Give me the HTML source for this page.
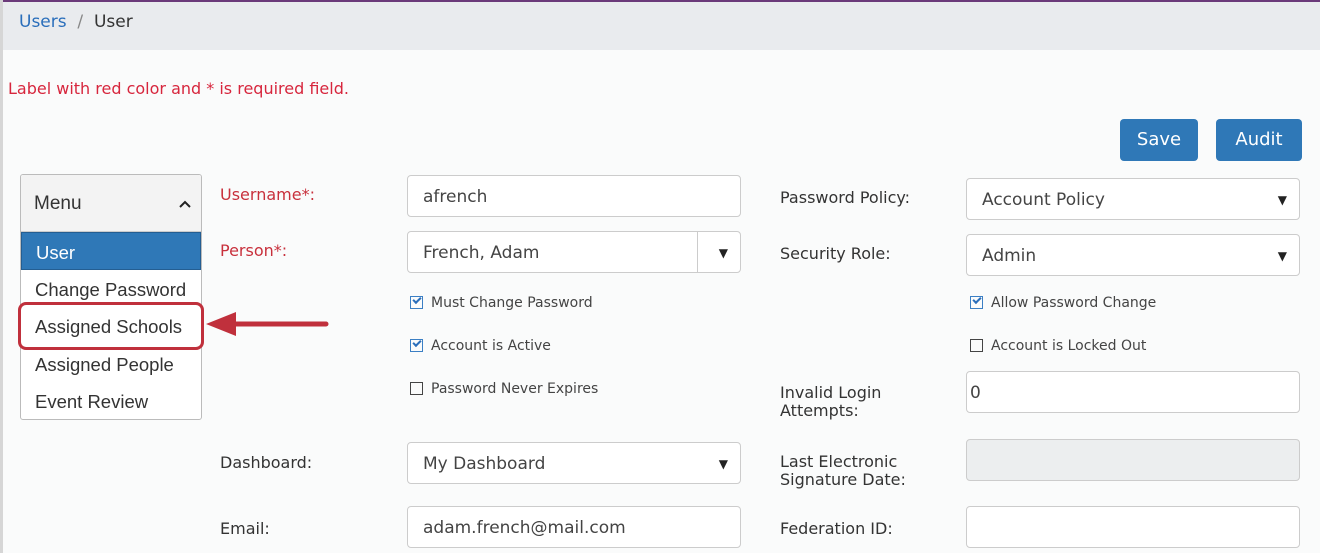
<!DOCTYPE html>
<html><head><meta charset="utf-8"><style>
*{box-sizing:border-box;margin:0;padding:0}
body{width:1320px;height:553px;overflow:hidden;background:#fafbfb;font-family:"DejaVu Sans","Liberation Sans",sans-serif;color:#333;position:relative}
.a{position:absolute}
.top{left:0;top:0;width:1320px;height:2px;background:#6b3a7a}
.lb{left:0;top:0;width:3px;height:553px;background:#d6d6d6}
.bc{left:3px;top:2px;width:1317px;height:48px;background:#e9ebee;font-size:17px;padding:10px 0 0 16px}
.bc span{color:#2a6ebb}
.req{left:8px;top:79px;color:#d7263d;font-size:16px}
.btn{background:#2f78b7;color:#fff;border-radius:4px;font-size:18px;text-align:center;line-height:42px;height:42px;top:119px}
.lbl{font-size:16px;color:#333}
.red{color:#c8303c}
.in{background:#fff;border:1px solid #ccc;border-radius:4px;font-size:17px;color:#444;padding-left:15px;line-height:42px;height:42px}
.in .c{position:absolute;right:12px;top:0;font-size:12px;color:#222}
.chk{font-size:14px;color:#444}
.box{display:inline-block;width:13px;height:13px;border:1.5px solid #444;vertical-align:-2px;margin-right:8px;position:relative}
.box.on{border-color:#3b7fc4}
.box.on:after{content:"";position:absolute;left:2px;top:0px;width:6px;height:3px;border-left:2px solid #2a6ebb;border-bottom:2px solid #2a6ebb;transform:rotate(-45deg)}
.menu{left:20px;top:174px;width:182px;height:246px;border:1px solid #bbb;border-radius:3px;background:#fff;overflow:hidden;font-family:"Liberation Sans",sans-serif}
.mh{height:57px;background:#f3f3f3;border-bottom:1px solid #ccc;font-size:19px;padding:18px 0 0 13px;position:relative}
.mi{height:37.5px;font-size:18.5px;padding:9px 0 0 14px;color:#333}
</style></head><body>
<div class="a top"></div>
<div class="a bc"><span>Users</span> <span style="color:#888">&nbsp;/&nbsp;</span> User</div>
<div class="a lb"></div>
<div class="a req">Label with red color and * is required field.</div>
<div class="a btn" style="left:1120px;width:78px">Save</div>
<div class="a btn" style="left:1216px;width:86px">Audit</div>

<div class="a menu">
<div class="mh">Menu<svg style="position:absolute;right:10px;top:25px" width="12" height="8"><path d="M1 7L6 2L11 7" stroke="#222" stroke-width="2" fill="none"/></svg></div>
<div class="mi" style="background:#2f78b7;color:#fff;border:1px solid #245e92">User</div>
<div class="mi">Change Password</div>
<div class="mi">Assigned Schools</div>
<div class="mi">Assigned People</div>
<div class="mi">Event Review</div>
</div>
<div class="a" style="left:18px;top:302px;width:186px;height:48px;border:3px solid #c0303c;border-radius:8px"></div>
<svg class="a" style="left:204px;top:308px" width="126" height="36"><path d="M30 16H122" stroke="#c0303c" stroke-width="5" stroke-linecap="round"/><path d="M2 16L32 4V28Z" fill="#c0303c"/></svg>

<div class="a lbl red" style="left:220px;top:185px">Username*:</div>
<div class="a lbl red" style="left:220px;top:241px">Person*:</div>
<div class="a in" style="left:407px;top:175px;width:334px">afrench</div>
<div class="a in" style="left:407px;top:231px;width:334px">French, Adam<span style="position:absolute;left:289px;top:0;width:1px;height:40px;background:#ccc"></span><span class="c">▼</span></div>
<div class="a chk" style="left:410px;top:295px"><span class="box on"></span>Must Change Password</div>
<div class="a chk" style="left:410px;top:338px"><span class="box on"></span>Account is Active</div>
<div class="a chk" style="left:410px;top:381px"><span class="box"></span>Password Never Expires</div>
<div class="a lbl" style="left:220px;top:453px">Dashboard:</div>
<div class="a in" style="left:407px;top:442px;width:334px">My Dashboard<span class="c">▼</span></div>
<div class="a lbl" style="left:220px;top:519px">Email:</div>
<div class="a in" style="left:407px;top:506px;width:334px">adam.french@mail.com</div>

<div class="a lbl" style="left:780px;top:188px">Password Policy:</div>
<div class="a in" style="left:966px;top:178px;width:334px">Account Policy<span class="c">▼</span></div>
<div class="a lbl" style="left:780px;top:244px">Security Role:</div>
<div class="a in" style="left:966px;top:234px;width:334px">Admin<span class="c">▼</span></div>
<div class="a chk" style="left:970px;top:295px"><span class="box on"></span>Allow Password Change</div>
<div class="a chk" style="left:970px;top:338px"><span class="box"></span>Account is Locked Out</div>
<div class="a lbl" style="left:780px;top:384px;line-height:18px">Invalid Login<br>Attempts:</div>
<div class="a in" style="left:966px;top:371px;width:334px;padding-left:3px">0</div>
<div class="a lbl" style="left:780px;top:453px;line-height:18px">Last Electronic<br>Signature Date:</div>
<div class="a in" style="left:966px;top:439px;width:334px;background:#eceeef"></div>
<div class="a lbl" style="left:780px;top:519px">Federation ID:</div>
<div class="a in" style="left:966px;top:506px;width:334px"></div>
</body></html>
